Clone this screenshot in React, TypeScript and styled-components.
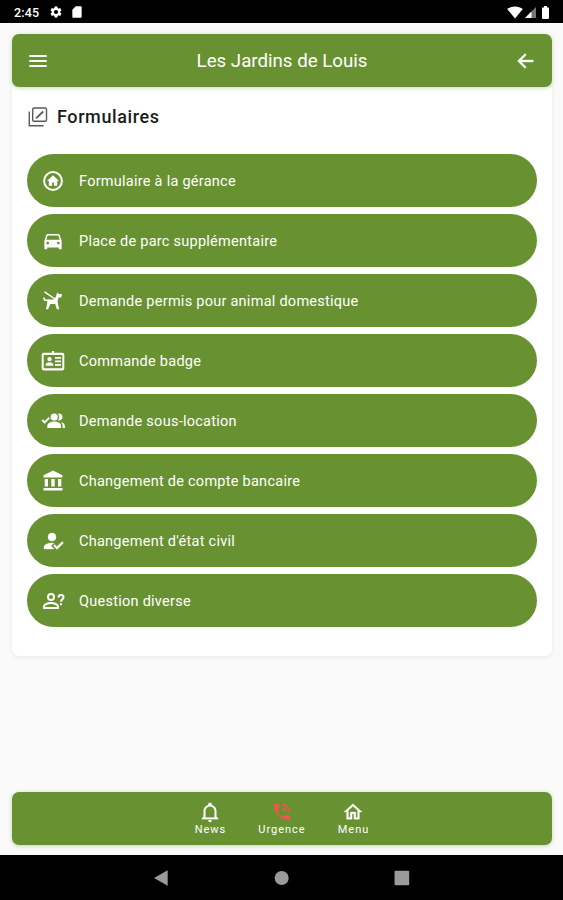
import React from "react";
import styled, { createGlobalStyle } from "styled-components";

const GlobalStyle = createGlobalStyle`
  * { box-sizing: border-box; }
  body { margin: 0; background: #fafafa; font-family: Roboto, sans-serif; }
`;

const green = "#689132";

const Screen = styled.div`
  width: 563px;
  height: 900px;
  display: flex;
  flex-direction: column;
  background: #fafafa;
  overflow: hidden;
`;

const StatusBar = styled.div`
  height: 23px;
  flex: none;
  background: #000;
  color: #fff;
  display: flex;
  align-items: center;
  padding: 1px 12px 0 14px;
  svg { display: block; }
`;

const Clock = styled.span`
  width: 35px;
  font-size: 12.5px;
  font-weight: 500;
  letter-spacing: 0.2px;
`;

const StatusIcons = styled.div<{ $right?: boolean; $gap: number }>`
  display: flex;
  align-items: center;
  gap: ${(p) => p.$gap}px;
  margin-left: ${(p) => (p.$right ? "auto" : "0")};
`;

const Content = styled.main`
  flex: 1;
  display: flex;
  flex-direction: column;
  padding: 11px 11px 10.5px 12px;
`;

const Bar = styled.div`
  flex: none;
  height: 53px;
  border-radius: 7px;
  background: ${green};
  color: #fff;
  display: flex;
  align-items: center;
  box-shadow: 0 1px 4px rgba(104, 145, 50, 0.35);
  position: relative;
`;

const Header = styled(Bar)`
  justify-content: space-between;
  padding: 0 14px;
`;

const Title = styled.h1`
  margin: 0;
  font-size: 18.7px;
  font-weight: 400;
`;

const Card = styled.section`
  height: 569px;
  background: #fff;
  border-radius: 0 0 7px 7px;
  padding: 17px 15px 0;
  box-shadow: 0 1px 4px rgba(0, 0, 0, 0.08);
`;

const Heading = styled.h2`
  margin: 0 0 25px;
  height: 25px;
  display: flex;
  align-items: center;
  gap: 7px;
  font-size: 18px;
  font-weight: 500;
  letter-spacing: 0.6px;
  color: #1c1c1c;
`;

const List = styled.div`
  display: flex;
  flex-direction: column;
  gap: 7px;
`;

const Item = styled.button`
  height: 53px;
  border: 0;
  border-radius: 27px;
  background: ${green};
  color: #fff;
  display: flex;
  align-items: center;
  gap: 14px;
  padding: 1px 14px 0;
  font-family: inherit;
  font-size: 14.5px;
  text-align: left;
`;

const ItemLabel = styled.span`
  letter-spacing: 0.26px;
`;

const Footer = styled(Bar)`
  margin-top: auto;
  justify-content: center;
`;

const Tab = styled.div`
  width: 71.5px;
  display: flex;
  flex-direction: column;
  align-items: center;
  gap: 1px;
  font-size: 11px;
  line-height: 12px;
  letter-spacing: 0.98px;
  svg { margin-left: -1px; }
`;

const AndroidNav = styled.nav`
  height: 45px;
  flex: none;
  background: #000;
  display: flex;
  align-items: center;
  justify-content: center;
  gap: 104px;
`;

const Icon = ({ size = 24, color = "currentColor", children }: { size?: number; color?: string; children: React.ReactNode }) => (
  <svg width={size} height={size} viewBox="0 0 24 24" fill={color}>{children}</svg>
);

const items = [
  {
    label: "Formulaire à la gérance",
    icon: (
      <>
        <circle cx="12" cy="12" r="8.9" fill="none" stroke="currentColor" strokeWidth="2" />
        <path d="M12 6.2 6 11.9H7.800v4.900h3.300v-3.400h1.800v3.400h3.300v-4.900H18z" />
      </>
    ),
  },
  {
    label: "Place de parc supplémentaire",
    icon: <path transform="translate(.5 .2) scale(.96)" d="M18.920 6.010C18.720 5.420 18.160 5 17.500 5h-11c-.66 0-1.210.42-1.420 1.010L3 12v8c0 .55.45 1 1 1h1c.55 0 1-.45 1-1v-1h12v1c0 .55.45 1 1 1h1c.55 0 1-.45 1-1v-8l-2.080-5.990zM6.500 16c-.83 0-1.500-.67-1.500-1.500S5.670 13 6.500 13s1.500.67 1.500 1.500S7.330 16 6.500 16zm11 0c-.83 0-1.500-.67-1.500-1.500s.67-1.500 1.500-1.500 1.500.67 1.500 1.500-.67 1.500-1.500 1.500zM5 11l1.500-4.500h11L19 11H5z" />,
  },
  {
    label: "Demande permis pour animal domestique",
    icon: (
      <>
        <path d="M16.200 3.600 18 5h2.800v1.700c0 1-.8 1.800-1.800 1.800h-1.300l-1 2.700v2.600l1.500 6.400h-2.300l-1.700-5.300H9.300l-2.200 5.300H5l1.200-5.800V10.500h6.500l2-2.500z" />
        <path d="M3.500 2.800 14 10M2.600 8.600l1.200 2.700h4" fill="none" stroke="currentColor" strokeWidth="1.500" />
      </>
    ),
  },
  {
    label: "Commande badge",
    icon: (
      <>
        <path fillRule="evenodd" d="M2.500 3.800h19A1.800 1.800 0 0 1 23.300 5.600v14a1.800 1.800 0 0 1-1.800 1.800h-19A1.800 1.800 0 0 1 .7 19.600v-14A1.800 1.800 0 0 1 2.500 3.800zM2.700 6v13.300h18.600V6z" />
        <circle cx="8.500" cy="10.100" r="2.200" />
        <path d="M4.600 16.700v-1c0-1.600 2-2.500 3.900-2.500s3.900.9 3.900 2.500v1zM14 8h6v1.800h-6zM14 11.500h6v1.800h-6zM14 15h6v1.800h-6zM10.900 2h2.200v2.500h-2.200z" />
      </>
    ),
  },
  {
    label: "Demande sous-location",
    icon: (
      <>
        <circle cx="13.200" cy="8" r="3.600" />
        <path d="M17.100 4.500a3.600 3.600 0 1 1 0 7c1.300-1.900 1.300-5.100 0-7zM6.300 19v-2c0-2.700 3.500-4.400 7-4.400s6.800 1.700 6.800 4.400v2zM19.300 13c2.500.4 4.600 1.800 4.600 4v2h-2.200v-2c0-1.600-.8-3-2.400-4z" />
        <path d="m1.200 11 2.400 2.400L8.300 8.700" fill="none" stroke="currentColor" strokeWidth="2" />
      </>
    ),
  },
  {
    label: "Changement de compte bancaire",
    icon: <path d="M3.700 10v7.500h3.300V10H3.700zm6.600 0v7.500h3.400V10h-3.400zM2.500 21.500h19v-2.600h-19v2.600zM17 10v7.500h3.300V10H17zM12 1.500 2.500 6.200v2.200h19V6.200L12 1.500z" />,
  },
  {
    label: "Changement d'état civil",
    icon: <path d="M21.100 12.500 22.500 13.910 15.970 20.500 12.500 17 13.900 15.590 15.970 17.670 21.100 12.500M11 4A4 4 0 1 1 11 12 4 4 0 0 1 11 4M11 14 12.890 14.110 10 17 13 20H3v-2C3 15.790 6.580 14 11 14z" stroke="currentColor" strokeWidth=".3" />,
  },
  {
    label: "Question diverse",
    icon: (
      <>
        <g fill="none" stroke="currentColor" strokeWidth="2">
          <circle cx="10" cy="8" r="3" />
          <path d="M3 19v-1.500c0-2 3.600-3.500 7-3.500s7 1.500 7 3.500V19z" />
          <path d="M17.500 8.400c0-1.600 1.100-2.400 2.500-2.400s2.500.8 2.500 2.200c0 2-2.500 2.100-2.500 4.600" />
        </g>
        <path d="M19 14.200h2v2h-2z" />
      </>
    ),
  },
];

export default function App() {
  return (
    <Screen>
      <GlobalStyle />
      <StatusBar>
        <Clock>2:45</Clock>
        <StatusIcons $gap={7}>
          <Icon size={14}>
            <path d="M19.140 12.940c.04-.3.06-.61.06-.94 0-.32-.02-.64-.07-.94l2.030-1.580a.49.49 0 0 0 .12-.61l-1.920-3.320a.488.488 0 0 0-.59-.22l-2.390.96c-.5-.38-1.030-.7-1.620-.94l-.36-2.540a.484.484 0 0 0-.48-.41h-3.840c-.24 0-.43.17-.47.41l-.36 2.540c-.59.24-1.130.57-1.620.94l-2.390-.96c-.22-.08-.47 0-.59.22L2.740 8.870c-.12.21-.08.47.12.61l2.030 1.580c-.05.3-.09.63-.09.94s.02.64.07.94l-2.030 1.580a.49.49 0 0 0-.12.61l1.920 3.320c.12.22.37.29.59.22l2.390-.96c.5.38 1.030.7 1.620.94l.36 2.540c.05.24.24.41.48.41h3.840c.24 0 .44-.17.47-.41l.36-2.540c.59-.24 1.130-.56 1.620-.94l2.390.96c.22.08.47 0 .59-.22l1.920-3.320c.12-.22.07-.47-.12-.61l-2.010-1.580zM12 15.600A3.600 3.600 0 1 1 12 8.400a3.600 3.600 0 0 1 0 7.200z" />
          </Icon>
          <Icon size={14}><path d="M20 4c0-1.100-.9-2-2-2h-8L4 8v12c0 1.100.9 2 2 2h12c1.100 0 2-.9 2-2z" /></Icon>
        </StatusIcons>
        <StatusIcons $right $gap={1.5}>
          <svg width="16" height="13" viewBox="0 0 16 13"><path d="M8 12.500.2 3C4.500-.5 11.500-.5 15.800 3z" fill="#fff" /></svg>
          <svg width="11" height="12" viewBox="0 0 11 12"><path d="M0 12 11 1v11z" fill="#777" /><path d="M0 12 6.500 5.500V12z" fill="#fff" /></svg>
          <svg width="14" height="13" viewBox="0 0 14 13"><path d="M5 1.500h2V0h3v1.500h2V12a1 1 0 0 1-1 1H6a1 1 0 0 1-1-1z" fill="#fff" /></svg>
        </StatusIcons>
      </StatusBar>

      <Content>
        <Header>
          <Icon><path d="M3.300 17.900h17.400v-2H3.300v2zm0-4.900h17.400v-2H3.300v2zm0-7v2h17.400V6H3.300z" /></Icon>
          <Title>Les Jardins de Louis</Title>
          <Icon><path d="M19.300 10.900H7.400l5-5L11 4.500 3.500 12l7.500 7.500 1.400-1.400-5-5h11.900z" stroke="currentColor" strokeWidth=".3" /></Icon>
        </Header>
        <Card>
          <Heading>
            <svg width="23" height="24" viewBox="0 0 23 24" fill="none" stroke="#5a5a5a" strokeWidth="1.400">
              <rect x="5.700" y="3" width="13.800" height="13.300" rx="1.200" />
              <path d="M2.300 6.500v14.300h14.300" />
              <path d="m9 13.300 7.200-6.800" strokeWidth="1.800" />
            </svg>
            Formulaires
          </Heading>
          <List>
            {items.map((item) => (
              <Item key={item.label}>
                <Icon>{item.icon}</Icon>
                <ItemLabel>{item.label}</ItemLabel>
              </Item>
            ))}
          </List>
        </Card>
        <Footer>
          <Tab>
            <Icon size={22}><path stroke="currentColor" strokeWidth=".2" d="M10 21H14C14 22.100 13.100 23 12 23S10 22.100 10 21M21 19V20H3V19L5 17V11C5 7.900 7.030 5.170 10 4.290V4C10 2.900 10.900 2 12 2S14 2.900 14 4V4.290C16.970 5.170 19 7.900 19 11V17L21 19M17 11C17 8.240 14.760 6 12 6S7 8.240 7 11V18H17V11Z" /></Icon>
            News
          </Tab>
          <Tab>
            <Icon size={22} color="#f0564a"><path d="M20 15.500c-1.250 0-2.450-.2-3.570-.57-.35-.11-.74-.03-1.020.24l-2.200 2.200c-2.830-1.440-5.150-3.750-6.590-6.590l2.200-2.210c.28-.26.36-.65.25-1C8.700 6.450 8.500 5.250 8.500 4c0-.55-.45-1-1-1H4c-.55 0-1 .45-1 1 0 9.390 7.610 17 17 17 .55 0 1-.45 1-1v-3.500c0-.55-.45-1-1-1zM19 12h2c0-4.970-4.030-9-9-9v2c3.870 0 7 3.130 7 7zm-4 0h2c0-2.760-2.240-5-5-5v2c1.660 0 3 1.340 3 3z" /></Icon>
            Urgence
          </Tab>
          <Tab>
            <Icon size={22}><path stroke="currentColor" strokeWidth=".3" d="M12 5.690L17 10.190V18H15V12H9V18H7V10.190L12 5.690M12 3L2 12H5V20H11V14H13V20H19V12H22L12 3" /></Icon>
            Menu
          </Tab>
        </Footer>
      </Content>

      <AndroidNav>
        <Icon size={16} color="#9a9a9a"><path d="M0 12 20.500.5v23z" /></Icon>
        <Icon size={16} color="#9a9a9a"><circle cx="11.500" cy="12" r="10.500" /></Icon>
        <Icon size={16} color="#9a9a9a"><rect x=".8" y="1" width="22" height="22" rx="1.500" /></Icon>
      </AndroidNav>
    </Screen>
  );
}
